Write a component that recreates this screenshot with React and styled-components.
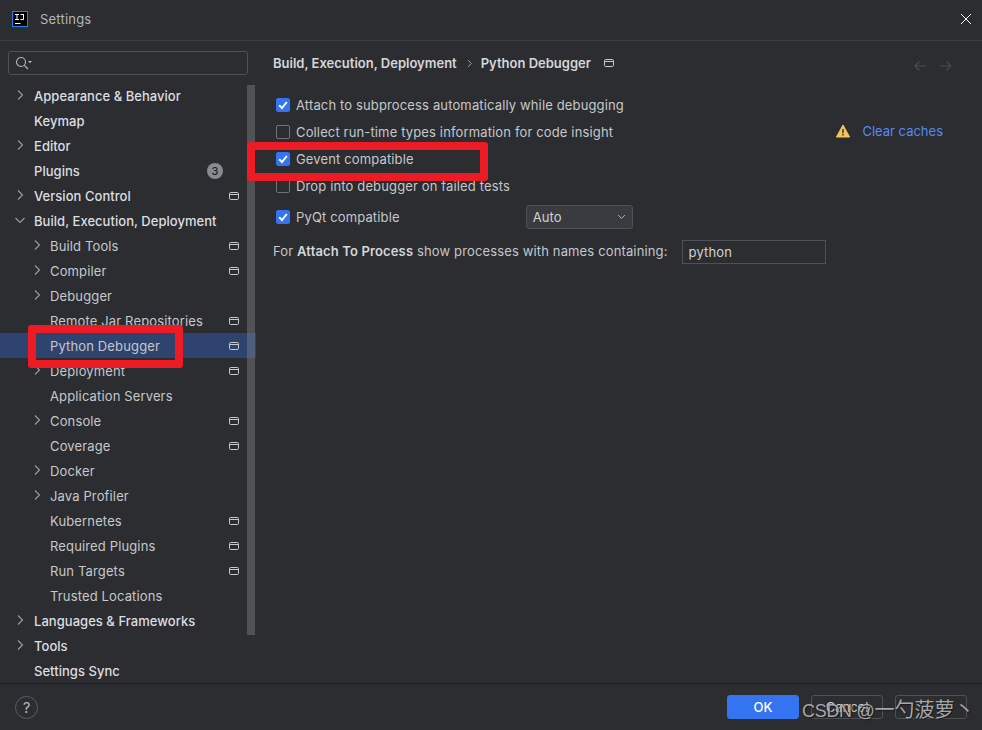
import React from "react";
import styled, { createGlobalStyle } from "styled-components";

const GlobalStyle = createGlobalStyle`
  html, body {
    margin: 0;
    padding: 0;
    background: #2b2d30;
  }
  * {
    box-sizing: border-box;
  }
`;

const Dialog = styled.div`
  position: relative;
  width: 982px;
  height: 730px;
  display: flex;
  flex-direction: column;
  overflow: hidden;
  background: #2b2d30;
  color: #d0d2d6;
  font-family: Inter, "Liberation Sans", sans-serif;
  font-size: 13px;
`;

const TitleBar = styled.header`
  height: 41px;
  flex: none;
  display: flex;
  align-items: center;
  padding: 0 10px 2px 12px;
  border-bottom: 1px solid #3d3f43;
`;

const Title = styled.span`
  margin-left: 12px;
  color: #b4b6ba;
  font-size: 13px;
  letter-spacing: 0.2px;
`;

const CloseButton = styled.span`
  margin-left: auto;
  display: flex;
  color: #ffffff;
`;

const Body = styled.div`
  flex: 1;
  min-height: 0;
  display: flex;
`;

const Sidebar = styled.aside`
  position: relative;
  width: 256px;
  flex: none;
  padding-top: 10px;
  overflow: hidden;
`;

const Search = styled.div`
  height: 24px;
  margin: 0 8px;
  display: flex;
  align-items: center;
  padding-left: 6px;
  border: 1px solid #4e5054;
  border-radius: 3px;
  color: #b4b6ba;
`;

const Tree = styled.ul`
  list-style: none;
  margin: 8px 0 0;
  padding: 0;
`;

const Row = styled.li`
  height: 25px;
  display: flex;
  align-items: center;
  padding-right: 16px;
  padding-left: ${(p) => (p.$nested ? 50 : 34)}px;
  position: relative;
  background: ${(p) => (p.$selected ? "#2e436e" : "transparent")};
  color: ${(p) => (p.$nested ? "#c6c8cc" : "#dcdee2")};
  font-weight: ${(p) => (p.$nested ? 400 : 500)};
  letter-spacing: ${(p) => (p.$nested ? 0.14 : 0.04)}px;
  white-space: nowrap;
`;

const Arrow = styled.span`
  position: absolute;
  left: ${(p) => (p.$nested ? 31 : 14)}px;
  top: 6px;
  display: flex;
  color: #9a9da2;
`;

const ProjectMark = styled.span`
  margin-left: auto;
  display: flex;
  color: #c6c8cc;
`;

const Badge = styled.span`
  margin-left: auto;
  margin-right: 17px;
  width: 16px;
  height: 16px;
  border-radius: 50%;
  background: #868a91;
  color: #1e1f22;
  font-size: 11px;
  font-weight: 500;
  line-height: 16px;
  text-align: center;
`;

const ScrollThumb = styled.div`
  position: absolute;
  left: 247px;
  top: 44px;
  width: 8px;
  height: 550px;
  background: rgba(130, 133, 140, 0.42);
`;

const Content = styled.main`
  flex: 1;
  min-width: 0;
  padding: 10px 30px 0 17px;
`;

const Breadcrumbs = styled.div`
  height: 24px;
  display: flex;
  align-items: center;
  font-weight: 600;
  color: #d4d6da;
`;

const CrumbArrow = styled.span`
  margin: 0 7px 0 8px;
  display: flex;
  color: #b4b6ba;
`;

const CrumbMark = styled.span`
  margin-left: 12px;
  display: flex;
  color: #c6c8cc;
`;

const NavArrows = styled.span`
  margin-left: auto;
  margin-top: 5px;
  display: flex;
  gap: 14px;
  color: #4a4c50;
`;

const Options = styled.div`
  margin-top: 16px;
`;

const OptionRow = styled.div`
  height: 27px;
  display: flex;
  align-items: center;
  padding-left: 3px;
  color: #c6c8cc;
  letter-spacing: 0.14px;
`;

const Box = styled.span`
  width: 14px;
  height: 14px;
  flex: none;
  margin-right: 6px;
  display: flex;
  align-items: center;
  justify-content: center;
  border-radius: 2px;
  background: ${(p) => (p.$checked ? "#3574f0" : "#2b2d30")};
  border: 1px solid ${(p) => (p.$checked ? "#3574f0" : "#6f737a")};
`;

const CacheLink = styled.span`
  margin-left: auto;
  margin-right: 9px;
  margin-bottom: 2px;
  display: flex;
  align-items: center;
  gap: 12px;
  color: #548af7;
  letter-spacing: 0;
`;

const ComboRow = styled(OptionRow)`
  height: 35px;
`;

const Combo = styled.div`
  width: 107px;
  height: 24px;
  margin-left: 126px;
  display: flex;
  align-items: center;
  justify-content: space-between;
  padding: 0 6px;
  background: #393b40;
  border: 1px solid #4e5054;
  border-radius: 3px;
  color: #d0d2d6;
`;

const ProcessRow = styled.div`
  height: 33px;
  display: flex;
  align-items: center;
  color: #c6c8cc;
  letter-spacing: 0.14px;
  b {
    font-weight: 600;
    color: #d4d6da;
  }
`;

const ProcessLabel = styled.span`
  white-space: pre;
`;

const ProcessInput = styled.div`
  width: 144px;
  height: 24px;
  margin-left: 14px;
  margin-top: 2px;
  padding-left: 6px;
  display: flex;
  align-items: center;
  border: 1px solid #4e5054;
  color: #d0d2d6;
`;

const Footer = styled.footer`
  height: 47px;
  flex: none;
  display: flex;
  align-items: center;
  padding: 0 15px;
  border-top: 1px solid #1e1f22;
`;

const Help = styled.span`
  width: 23px;
  height: 23px;
  display: flex;
  align-items: center;
  justify-content: center;
  border: 1px solid #5a5d62;
  border-radius: 50%;
  color: #b4b6ba;
  font-size: 15px;
`;

const Buttons = styled.div`
  margin-left: auto;
  display: flex;
  gap: 12px;
`;

const Button = styled.span`
  width: 72px;
  height: 24px;
  display: flex;
  align-items: center;
  justify-content: center;
  border-radius: 3px;
  border: 1px solid ${(p) => (p.$primary ? "#3574f0" : "#4e5054")};
  background: ${(p) => (p.$primary ? "#3574f0" : "transparent")};
  color: ${(p) => (p.$primary ? "#ffffff" : "#c6c8cc")};
  font-weight: ${(p) => (p.$primary ? 500 : 400)};
`;

const RedMark = styled.div`
  position: absolute;
  border: 8px solid #ed1c24;
  border-radius: 3px;
  pointer-events: none;
`;

const Watermark = styled.div`
  position: absolute;
  left: 802px;
  top: 695px;
  color: rgba(185, 185, 185, 0.9);
  font-family: "Liberation Sans", sans-serif;
  font-size: 18px;
  letter-spacing: -0.3px;
  line-height: 28px;
  text-shadow: 1px 1px 1px #1a1a1a;
  white-space: nowrap;
`;

const WatermarkName = styled.span`
  font-family: "Noto Sans CJK SC", sans-serif;
  font-size: 20px;
  letter-spacing: 0;
`;

const Chevron = ({ open, size = 12 }) => (
  <svg width={size} height={size} viewBox="0 0 12 12" fill="none" stroke="currentColor" strokeWidth="1.1">
    {open ? <path d="M1.5 4 6 8.5 10.5 4" /> : <path d="M4 1.5 8.5 6 4 10.5" />}
  </svg>
);

const ProjectIcon = () => (
  <svg width="12" height="12" viewBox="0 0 12 12" fill="none" stroke="currentColor" strokeWidth="1">
    <rect x="1.5" y="2.5" width="9" height="7" rx="1.2" />
    <path d="M1.5 4.5h9" />
  </svg>
);

const AppLogo = () => (
  <svg width="16" height="16" viewBox="0 0 16 16">
    <rect x="0.5" y="0.5" width="15" height="15" fill="#000000" stroke="#1685f0" />
    <path d="M3 3h4v1H5.5v4H7v1H3V8h1.5V4H3zM8.5 3H12v5.2Q12 9 11 9H8.5V8H11V4H8.5zM3 12h5.5v1H3z" fill="#ffffff" />
  </svg>
);

const items = [
  { label: "Appearance & Behavior", arrow: true },
  { label: "Keymap" },
  { label: "Editor", arrow: true },
  { label: "Plugins", badge: 3 },
  { label: "Version Control", arrow: true, mark: true },
  { label: "Build, Execution, Deployment", arrow: true, open: true },
  { label: "Build Tools", nested: true, arrow: true, mark: true },
  { label: "Compiler", nested: true, arrow: true, mark: true },
  { label: "Debugger", nested: true, arrow: true },
  { label: "Remote Jar Repositories", nested: true, mark: true },
  { label: "Python Debugger", nested: true, mark: true, selected: true },
  { label: "Deployment", nested: true, arrow: true, mark: true },
  { label: "Application Servers", nested: true },
  { label: "Console", nested: true, arrow: true, mark: true },
  { label: "Coverage", nested: true, mark: true },
  { label: "Docker", nested: true, arrow: true },
  { label: "Java Profiler", nested: true, arrow: true },
  { label: "Kubernetes", nested: true, mark: true },
  { label: "Required Plugins", nested: true, mark: true },
  { label: "Run Targets", nested: true, mark: true },
  { label: "Trusted Locations", nested: true },
  { label: "Languages & Frameworks", arrow: true },
  { label: "Tools", arrow: true },
  { label: "Settings Sync" },
];

const Check = ({ checked }) => (
  <Box $checked={checked}>
    {checked && (
      <svg width="12" height="12" viewBox="0 0 12 12" fill="none" stroke="#ffffff" strokeWidth="2">
        <path d="M2.2 6.2 5 9l4.8-6" />
      </svg>
    )}
  </Box>
);

export default function App() {
  return (
    <Dialog>
      <GlobalStyle />
      <TitleBar>
        <AppLogo />
        <Title>Settings</Title>
        <CloseButton>
          <svg width="12" height="12" viewBox="0 0 12 12" stroke="currentColor" strokeWidth="1">
            <path d="M1 1l10 10M11 1 1 11" />
          </svg>
        </CloseButton>
      </TitleBar>
      <Body>
        <Sidebar>
          <Search>
            <svg width="18" height="14" viewBox="0 0 18 14" fill="none" stroke="currentColor" strokeWidth="1.1">
              <circle cx="6" cy="6" r="4.5" />
              <path d="M9.3 9.3 13 13" />
              <path d="M13 5h4l-2 2.2z" fill="currentColor" stroke="none" />
            </svg>
          </Search>
          <Tree>
            {items.map((item) => (
              <Row key={item.label} $nested={item.nested} $selected={item.selected}>
                {item.arrow && (
                  <Arrow $nested={item.nested}>
                    <Chevron open={item.open} size={12} />
                  </Arrow>
                )}
                {item.label}
                {item.badge && <Badge>{item.badge}</Badge>}
                {item.mark && (
                  <ProjectMark>
                    <ProjectIcon />
                  </ProjectMark>
                )}
              </Row>
            ))}
          </Tree>
          <ScrollThumb />
        </Sidebar>
        <Content>
          <Breadcrumbs>
            Build, Execution, Deployment
            <CrumbArrow>
              <Chevron size={9} />
            </CrumbArrow>
            Python Debugger
            <CrumbMark>
              <ProjectIcon />
            </CrumbMark>
            <NavArrows>
              <svg width="12" height="12" viewBox="0 0 12 12" fill="none" stroke="currentColor" strokeWidth="1.2">
                <path d="M12 6H1M5.5 1.5 1 6l4.5 4.5" />
              </svg>
              <svg width="12" height="12" viewBox="0 0 12 12" fill="none" stroke="currentColor" strokeWidth="1.2">
                <path d="M0 6h11M6.5 1.5 11 6l-4.5 4.5" />
              </svg>
            </NavArrows>
          </Breadcrumbs>
          <Options>
            <OptionRow>
              <Check checked />
              Attach to subprocess automatically while debugging
            </OptionRow>
            <OptionRow>
              <Check />
              Collect run-time types information for code insight
              <CacheLink>
                <svg width="14" height="14" viewBox="0 0 14 14">
                  <path d="M7 1 13.6 13H.4z" fill="#f2c55c" stroke="#f2c55c" strokeLinejoin="round" />
                  <path d="M6.3 5h1.4v4.2H6.3zM6.3 10h1.4v1.4H6.3z" fill="#2b2d30" />
                </svg>
                Clear caches
              </CacheLink>
            </OptionRow>
            <OptionRow>
              <Check checked />
              Gevent compatible
            </OptionRow>
            <OptionRow>
              <Check />
              Drop into debugger on failed tests
            </OptionRow>
            <ComboRow>
              <Check checked />
              PyQt compatible
              <Combo>
                Auto
                <Chevron open size={9} />
              </Combo>
            </ComboRow>
            <ProcessRow>
              <ProcessLabel>
                For <b>Attach To Process</b> show processes with names containing:
              </ProcessLabel>
              <ProcessInput>python</ProcessInput>
            </ProcessRow>
          </Options>
        </Content>
      </Body>
      <Footer>
        <Help>?</Help>
        <Buttons>
          <Button $primary>OK</Button>
          <Button>Cancel</Button>
          <Button />
        </Buttons>
      </Footer>
      <RedMark style={{ left: 28, top: 325, width: 155, height: 43 }} />
      <RedMark style={{ left: 247, top: 142, width: 241, height: 39 }} />
      <Watermark>
        CSDN @<WatermarkName>一勺菠萝丶</WatermarkName>
      </Watermark>
    </Dialog>
  );
}
